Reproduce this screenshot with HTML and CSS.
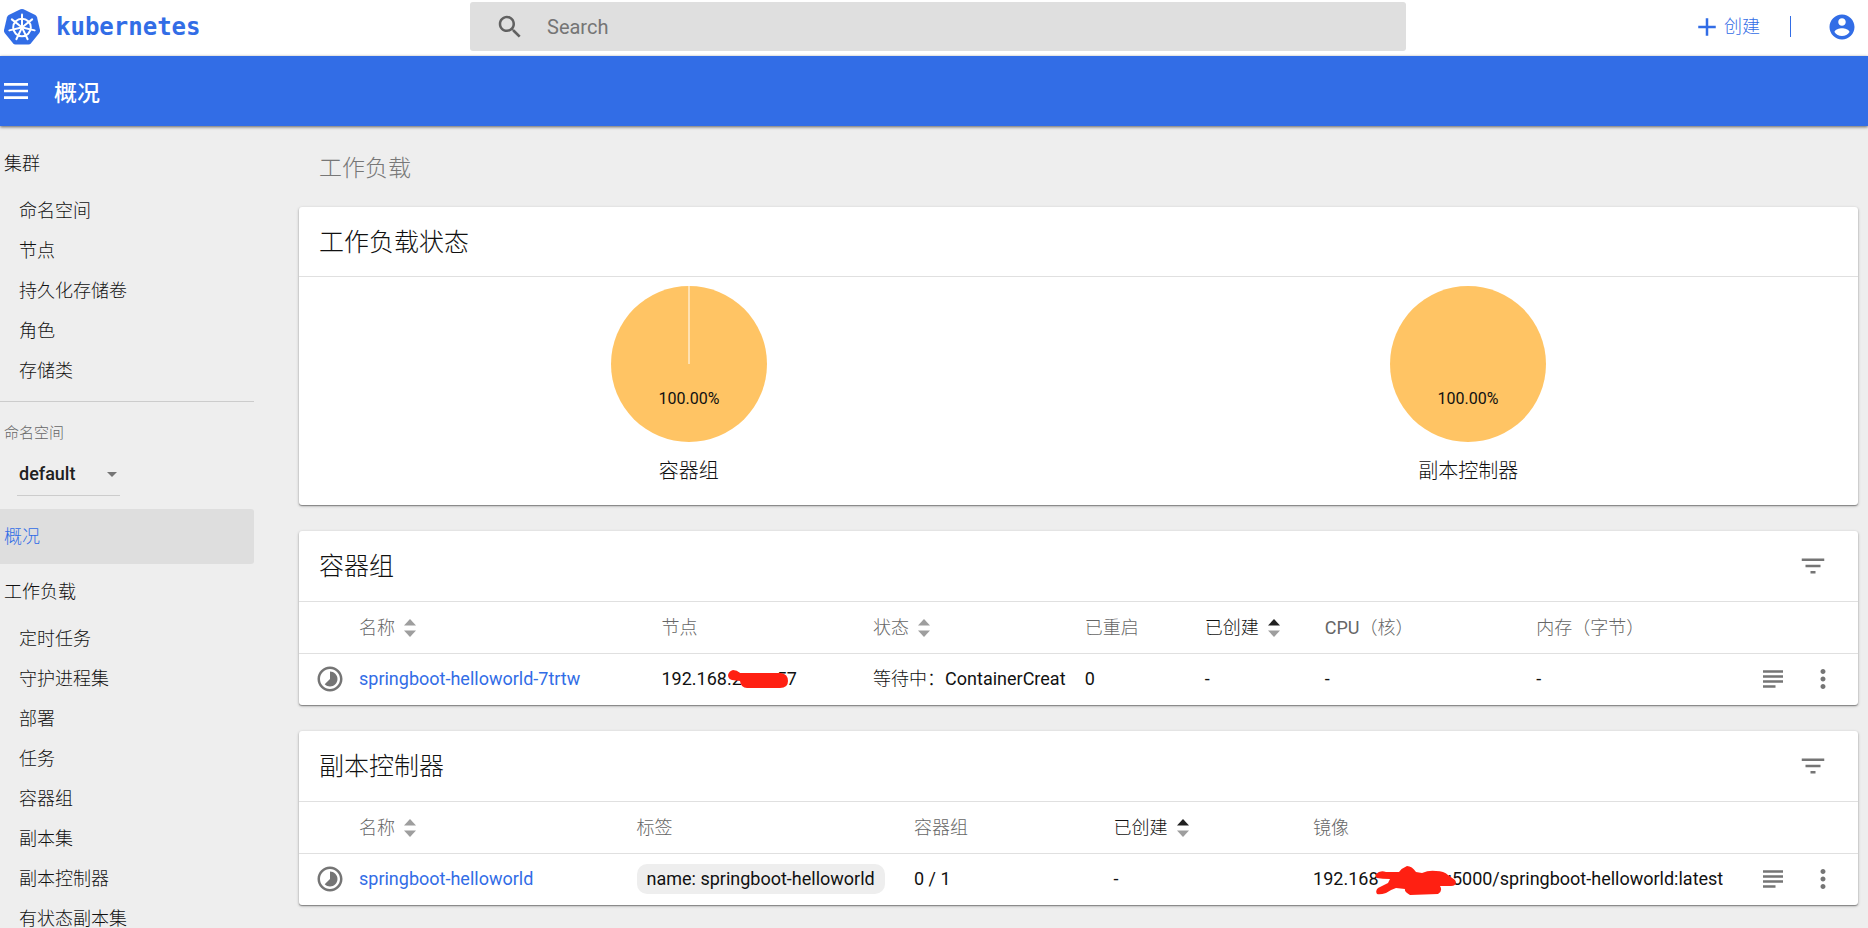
FILE: index.html
```html
<!DOCTYPE html>
<html lang="zh-CN">
<head>
<meta charset="utf-8">
<title>概况 - Kubernetes Dashboard</title>
<link rel="stylesheet" href="styles.css">
</head>
<body>
<svg class="symbols" aria-hidden="true">
  <symbol id="i-pending" viewBox="0 0 24 24"><path d="M16.24 7.76C15.07 6.59 13.54 6 12 6v6l-4.24 4.24c2.34 2.34 6.14 2.34 8.49 0 2.34-2.34 2.34-6.14-.01-8.48zM12 2C6.48 2 2 6.48 2 12s4.48 10 10 10 10-4.48 10-10S17.52 2 12 2zm0 18c-4.42 0-8-3.58-8-8s3.58-8 8-8 8 3.58 8 8-3.58 8-8 8z"/></symbol>
  <symbol id="i-filter" viewBox="0 0 24 24"><path d="M10 18h4v-2h-4v2zM3 6v2h18V6H3zm3 7h12v-2H6v2z"/></symbol>
  <symbol id="i-logs" viewBox="0 0 24 24"><path d="M14 17H4v2h10v-2zm6-8H4v2h16V9zM4 15h16v-2H4v2zM4 5v2h16V5H4z"/></symbol>
  <symbol id="i-more" viewBox="0 0 24 24"><path d="M12 8c1.1 0 2-.9 2-2s-.9-2-2-2-2 .9-2 2 .9 2 2 2zm0 2c-1.1 0-2 .9-2 2s.9 2 2 2 2-.9 2-2-.9-2-2-2zm0 6c-1.1 0-2 .9-2 2s.9 2 2 2 2-.9 2-2-.9-2-2-2z"/></symbol>
  <symbol id="i-sort" viewBox="0 0 12 18"><path class="sort-up" d="M0 6.500L6 0l6 6.500z"/><path class="sort-down" d="M0 11.500h12L6 18z"/></symbol>
</svg>
<div class="app">
  <header class="topbar">
    <a class="brand" href="#">
      <svg class="brand-mark" viewBox="0 0 38 38" aria-hidden="true">
        <path class="hull" d="M17.500 1.300Q19 .6 20.500 1.300L32.300 7Q33.600 7.700 34 9.200L37 22Q37.300 23.600 36.300 24.900L28 35.300Q27 36.500 25.500 36.500H12.500Q11 36.500 10 35.300L1.700 24.900Q.7 23.600 1 22L4 9.200Q4.400 7.700 5.700 7z"/>
        <g class="wheel">
          <circle cx="19" cy="19.500" r="8.800"/>
          <circle class="hub" cx="19" cy="19.500" r="1.700"/>
          <g id="spoke"><path d="M19 18V6.500"/></g>
          <use href="#spoke" transform="rotate(51.430 19 19.500)"/>
          <use href="#spoke" transform="rotate(102.860 19 19.500)"/>
          <use href="#spoke" transform="rotate(154.290 19 19.500)"/>
          <use href="#spoke" transform="rotate(205.710 19 19.500)"/>
          <use href="#spoke" transform="rotate(257.140 19 19.500)"/>
          <use href="#spoke" transform="rotate(308.570 19 19.500)"/>
        </g>
      </svg>
      <span class="brand-name">kubernetes</span>
    </a>
    <label class="search">
      <svg class="icon" viewBox="0 0 24 24" aria-hidden="true"><path d="M15.500 14h-.79l-.28-.27C15.410 12.590 16 11.110 16 9.500 16 5.910 13.090 3 9.500 3S3 5.910 3 9.500 5.910 16 9.500 16c1.610 0 3.090-.59 4.230-1.570l.27.28v.79l5 4.990L20.490 19l-4.990-5zm-6 0C7.010 14 5 11.990 5 9.500S7.010 5 9.500 5 14 7.010 14 9.500 11.990 14 9.500 14z"/></svg>
      <input class="search-input" type="search" placeholder="Search" aria-label="Search">
    </label>
    <div class="tools">
      <button class="create" type="button">
        <svg class="icon" viewBox="0 0 24 24" aria-hidden="true"><path d="M19 13h-6v6h-2v-6H5v-2h6V5h2v6h6v2z"/></svg>创建
      </button>
      <span class="divider"></span>
      <button class="icon-button account" type="button" aria-label="Account">
        <svg class="icon" viewBox="0 0 24 24" aria-hidden="true"><path d="M12 2C6.480 2 2 6.480 2 12s4.480 10 10 10 10-4.480 10-10S17.520 2 12 2zm0 3c1.660 0 3 1.340 3 3s-1.340 3-3 3-3-1.340-3-3 1.340-3 3-3zm0 14.200c-2.500 0-4.710-1.280-6-3.220.03-1.990 4-3.080 6-3.080 1.990 0 5.970 1.090 6 3.080-1.290 1.940-3.500 3.220-6 3.220z"/></svg>
      </button>
    </div>
  </header>

  <div class="actionbar">
    <button class="icon-button menu" type="button" aria-label="Menu">
      <svg class="icon-large" viewBox="0 0 24 24" aria-hidden="true"><path d="M3 18h18v-2H3v2zm0-5h18v-2H3v2zm0-7v2h18V6H3z"/></svg>
    </button>
    <h1 class="page-title">概况</h1>
  </div>

  <div class="body">
    <nav class="sidebar">
      <a class="nav-group" href="#">集群</a>
      <a class="nav-item" href="#">命名空间</a>
      <a class="nav-item" href="#">节点</a>
      <a class="nav-item" href="#">持久化存储卷</a>
      <a class="nav-item" href="#">角色</a>
      <a class="nav-item" href="#">存储类</a>
      <div class="namespace">
        <label class="namespace-label" for="namespace">命名空间</label>
        <div class="select">
          <select id="namespace" class="select-field"><option>default</option></select>
          <svg class="select-arrow" viewBox="0 0 10 5" aria-hidden="true"><path d="M0 0h10L5 5z"/></svg>
        </div>
      </div>
      <a class="nav-group active" href="#">概况</a>
      <a class="nav-group" href="#">工作负载</a>
      <a class="nav-item" href="#">定时任务</a>
      <a class="nav-item" href="#">守护进程集</a>
      <a class="nav-item" href="#">部署</a>
      <a class="nav-item" href="#">任务</a>
      <a class="nav-item" href="#">容器组</a>
      <a class="nav-item" href="#">副本集</a>
      <a class="nav-item" href="#">副本控制器</a>
      <a class="nav-item" href="#">有状态副本集</a>
    </nav>

    <main class="content">
      <h2 class="section-title">工作负载</h2>

      <section class="card">
        <div class="card-head"><h3 class="card-title">工作负载状态</h3></div>
        <div class="charts">
          <figure class="chart">
            <svg class="pie" viewBox="0 0 156 156" role="img" aria-label="100.00%">
              <circle cx="78" cy="78" r="78"/><path class="seam" d="M78 0v78"/>
              <text x="78" y="118">100.00%</text>
            </svg>
            <figcaption>容器组</figcaption>
          </figure>
          <figure class="chart">
            <svg class="pie" viewBox="0 0 156 156" role="img" aria-label="100.00%">
              <circle cx="78" cy="78" r="78"/>
              <text x="78" y="118">100.00%</text>
            </svg>
            <figcaption>副本控制器</figcaption>
          </figure>
        </div>
      </section>

      <section class="card">
        <div class="card-head list-head">
          <h3 class="card-title">容器组</h3>
          <button class="icon-button" type="button" aria-label="Filter"><svg class="icon"><use href="#i-filter"/></svg></button>
        </div>
        <table class="grid">
          <colgroup><col class="c-icon"><col class="c-pod-name"><col><col><col class="c-short"><col class="c-short"><col><col><col class="c-actions"></colgroup>
          <thead>
            <tr>
              <th></th>
              <th><button class="sort" type="button">名称<svg class="sort-icon"><use href="#i-sort"/></svg></button></th>
              <th>节点</th>
              <th><button class="sort" type="button">状态<svg class="sort-icon"><use href="#i-sort"/></svg></button></th>
              <th>已重启</th>
              <th><button class="sort sorted" type="button">已创建<svg class="sort-icon"><use href="#i-sort"/></svg></button></th>
              <th>CPU（核）</th>
              <th>内存（字节）</th>
              <th></th>
            </tr>
          </thead>
          <tbody>
            <tr>
              <td class="status"><svg class="icon"><use href="#i-pending"/></svg></td>
              <td><a class="link" href="#">springboot-helloworld-7trtw</a></td>
              <td>192.168.2<span class="mask mask-node"><svg class="scribble scribble-node" viewBox="0 0 61 19"><path d="M5 0Q9 0 12 3H53Q60 4 60 11 60 18 52 18H19Q13 18 12 11L4 10Q0 9 0 5 1 1 5 0z"/></svg></span>57</td>
              <td class="clip">等待中：ContainerCreat</td>
              <td>0</td>
              <td>-</td>
              <td>-</td>
              <td>-</td>
              <td>
                <div class="actions">
                  <button class="icon-button" type="button" aria-label="Logs"><svg class="icon"><use href="#i-logs"/></svg></button>
                  <button class="icon-button" type="button" aria-label="More"><svg class="icon"><use href="#i-more"/></svg></button>
                </div>
              </td>
            </tr>
          </tbody>
        </table>
      </section>

      <section class="card">
        <div class="card-head list-head">
          <h3 class="card-title">副本控制器</h3>
          <button class="icon-button" type="button" aria-label="Filter"><svg class="icon"><use href="#i-filter"/></svg></button>
        </div>
        <table class="grid">
          <colgroup><col class="c-icon"><col class="c-wide"><col class="c-wide"><col class="c-mid"><col class="c-mid"><col><col class="c-actions"></colgroup>
          <thead>
            <tr>
              <th></th>
              <th><button class="sort" type="button">名称<svg class="sort-icon"><use href="#i-sort"/></svg></button></th>
              <th>标签</th>
              <th>容器组</th>
              <th><button class="sort sorted" type="button">已创建<svg class="sort-icon"><use href="#i-sort"/></svg></button></th>
              <th>镜像</th>
              <th></th>
            </tr>
          </thead>
          <tbody>
            <tr>
              <td class="status"><svg class="icon"><use href="#i-pending"/></svg></td>
              <td><a class="link" href="#">springboot-helloworld</a></td>
              <td><span class="chip">name: springboot-helloworld</span></td>
              <td>0 / 1</td>
              <td>-</td>
              <td>192.168<span class="mask mask-image"><svg class="scribble scribble-image" viewBox="0 0 80 29"><path d="M0 8Q4 4 10 6L23 6Q26 2 31 0 36 0 40 6L46 7Q53 4 60 5 68 5 72 9L79 14Q82 19 75 20L64 20Q67 25 62 28L34 29Q28 26 29 23L20 22Q14 24 10 27 4 29 1 28-1 25 2 22 8 19 12 17L14 13Q6 13 1 12-1 10 0 8z"/></svg></span>:5000/springboot-helloworld:latest</td>
              <td>
                <div class="actions">
                  <button class="icon-button" type="button" aria-label="Logs"><svg class="icon"><use href="#i-logs"/></svg></button>
                  <button class="icon-button" type="button" aria-label="More"><svg class="icon"><use href="#i-more"/></svg></button>
                </div>
              </td>
            </tr>
          </tbody>
        </table>
      </section>
    </main>
  </div>
</div>
</body>
</html>
```
FILE: styles.css
```css
:root {
  --blue: #326de6;
  --text: #111;
  --muted: #757575;
  --line: #e0e0e0;
}

* { box-sizing: border-box; }

body {
  margin: 0;
  background: #eee;
  color: var(--text);
  font-family: Roboto, "Noto Sans CJK SC Light", "Noto Sans CJK SC", sans-serif;
  font-size: 18px;
  line-height: 24px;
}

a { color: inherit; text-decoration: none; }

button, input, select { font: inherit; color: inherit; }

button {
  padding: 0;
  border: 0;
  background: none;
  cursor: pointer;
}

h1, h2, h3, figure { margin: 0; font-weight: 400; }

.symbols { position: absolute; width: 0; height: 0; }

.icon {
  display: block;
  width: 30px;
  height: 30px;
  fill: currentColor;
  flex: none;
}

.icon-large {
  display: block;
  width: 32px;
  height: 32px;
  fill: currentColor;
}

.icon-button { color: var(--muted); }

.app {
  display: flex;
  flex-direction: column;
  height: 100vh;
  overflow: hidden;
}

/* Top bar */
.topbar {
  display: grid;
  grid-template-columns: 25% 50.2% 1fr;
  align-items: center;
  flex: none;
  height: 56px;
  padding: 0 0 3px 4px;
  background: #fff;
}

.brand {
  display: flex;
  align-items: center;
  gap: 15px;
  margin-left: -1px;
  color: var(--blue);
}

.brand-mark { width: 38px; height: 38px; }
.hull { fill: var(--blue); }
.wheel { fill: none; stroke: #fff; stroke-width: 2; stroke-linecap: round; }
.hub { fill: #fff; stroke: none; }

.brand-name {
  font-family: "DejaVu Sans Mono", monospace;
  font-size: 24px;
  font-weight: 700;
}

.search {
  display: flex;
  align-items: center;
  gap: 22px;
  height: 49px;
  padding: 0 25px;
  border-radius: 3px;
  background: #dfdfdf;
  color: #616161;
}

.search-input {
  flex: 1;
  min-width: 0;
  padding: 0;
  border: 0;
  outline: 0;
  background: none;
  font-size: 20px;
}

.search-input::placeholder { color: var(--muted); opacity: 1; }

.tools {
  display: flex;
  align-items: center;
  justify-content: flex-end;
  padding-right: 11px;
  color: var(--blue);
}

.create { display: flex; align-items: center; gap: 2px; }
.divider { width: 1px; height: 21px; margin: 0 36px 0 30px; background: var(--blue); }
.account { color: var(--blue); }

/* Blue bar */
.actionbar {
  position: relative;
  display: flex;
  align-items: center;
  gap: 22px;
  flex: none;
  height: 70px;
  background: var(--blue);
  color: #fff;
  box-shadow: 0 1px 3px rgba(0, 0, 0, .6);
}

.menu { color: #fff; }

.page-title {
  padding-top: 5px;
  font-family: Roboto, "Noto Sans CJK SC", sans-serif;
  font-size: 23px;
  font-weight: 500;
}

.body {
  display: flex;
  gap: 45px;
  flex: 1;
  min-height: 0;
}

/* Sidebar */
.sidebar {
  flex: none;
  width: 254px;
  padding-top: 10px;
  overflow: hidden;
}

.nav-group, .nav-item { display: block; }
.nav-group { padding: 16px 4px 15px; }
.nav-item { padding: 8px 19px; }

.active {
  border-radius: 0 3px 3px 0;
  background: #dedede;
  color: var(--blue);
}

.namespace {
  margin-top: 10px;
  padding: 19px 4px 13px;
  border-top: 1px solid #ccc;
}

.namespace-label {
  display: block;
  color: #666;
  font-size: 15px;
}

.select {
  position: relative;
  width: 103px;
  margin: 9px 0 0 13px;
}

.select-field {
  display: block;
  width: 100%;
  height: 42px;
  padding: 0 2px 2px;
  border: 0;
  border-bottom: 1px solid #ccc;
  background: none;
  appearance: none;
  color: #212121;
  font-weight: 500;
}

.select-arrow {
  position: absolute;
  top: 18px;
  right: 3px;
  width: 10px;
  height: 5px;
  fill: var(--muted);
  pointer-events: none;
}

/* Content */
.content {
  flex: 1;
  min-width: 0;
  margin-left: -4px;
  padding: 29px 10px 22px 4px;
  overflow: hidden;
}

.section-title {
  margin: 0 20px 24px;
  color: #777;
  font-size: 23px;
  line-height: 28px;
}

.card {
  margin-bottom: 26px;
  border-radius: 3px;
  background: #fff;
  box-shadow: 0 1px 3px rgba(0, 0, 0, .3), 0 1px 1px rgba(0, 0, 0, .3);
}

.card-head {
  display: flex;
  align-items: center;
  justify-content: space-between;
  height: 70px;
  padding: 0 30px 0 20px;
  border-bottom: 1px solid var(--line);
}

.list-head { height: 71px; }

.card-title {
  padding-top: 2px;
  font-size: 25px;
  line-height: 32px;
}

.charts { display: flex; padding: 9px 0 19px; }

.chart {
  display: flex;
  flex: 1;
  flex-direction: column;
  align-items: center;
  gap: 14px;
  font-size: 20px;
  line-height: 30px;
}

.pie { width: 156px; height: 156px; fill: #ffc464; }
.pie text { fill: #111; font-size: 16px; text-anchor: middle; }
.seam { stroke: #fff; stroke-width: 1; }

/* Tables */
.grid {
  width: 100%;
  border-collapse: collapse;
  table-layout: fixed;
}

.c-icon { width: 60px; }
.c-short { width: 120px; }
.c-actions { width: 110px; }
.c-pod-name { width: 19.4%; }
.c-wide { width: 17.8%; }
.c-mid { width: 12.8%; }

.grid th, .grid td {
  padding: 0;
  text-align: left;
  font-weight: 400;
  white-space: nowrap;
}

.grid th {
  height: 51px;
  padding-top: 2px;
  border-bottom: 1px solid var(--line);
  color: #666;
}

.grid td { height: 52px; }
.grid td.status { padding-left: 16px; color: var(--muted); }
.grid td.clip { overflow: hidden; }

.sort { display: flex; align-items: center; gap: 9px; }
.sort-icon { width: 12px; height: 18px; fill: #9e9e9e; }
.sorted { color: var(--text); --up: #212121; }
.sort-up { fill: var(--up, #9e9e9e); }

.link { color: var(--blue); }

.chip {
  display: inline-block;
  padding: 3px 10px;
  border-radius: 10px;
  background: #eee;
}

.actions { display: flex; gap: 20px; padding-left: 10px; }

/* Hand-drawn redaction marks */
.mask { position: relative; display: inline-block; }
.mask-node { width: 35px; }
.mask-image { width: 69px; }
.scribble { position: absolute; fill: #ff2012; }
.scribble-node { left: -14px; bottom: -4px; width: 61px; height: 19px; }
.scribble-image { left: -3px; bottom: -10px; width: 80px; height: 29px; }
```
